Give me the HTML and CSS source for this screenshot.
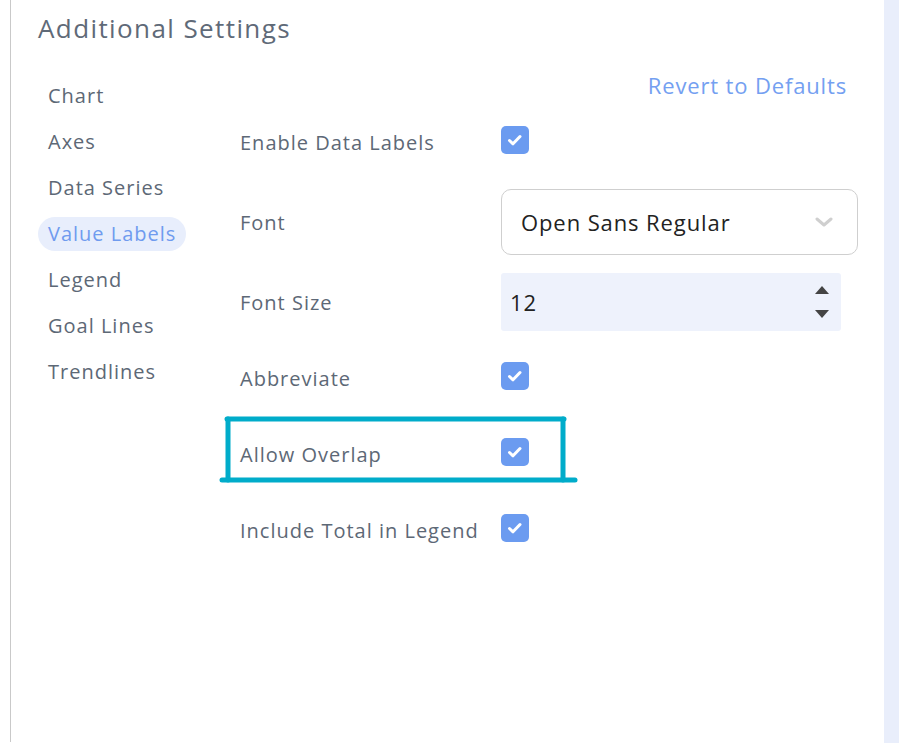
FILE: index.html
```html
<!DOCTYPE html>
<html lang="en">
<head>
<meta charset="utf-8">
<title>Additional Settings</title>
<link rel="stylesheet" href="styles.css">
</head>
<body>
<div class="page">
  <div class="panel">
    <h1 class="title">Additional Settings</h1>
    <div class="body">
      <nav class="nav">
        <div class="nav-item">Chart</div>
        <div class="nav-item">Axes</div>
        <div class="nav-item">Data Series</div>
        <div class="nav-item active">Value Labels</div>
        <div class="nav-item">Legend</div>
        <div class="nav-item">Goal Lines</div>
        <div class="nav-item">Trendlines</div>
      </nav>
      <div class="content">
        <div class="revert-row"><a class="revert">Revert to Defaults</a></div>
        <div class="form">
          <div class="row">
            <div class="label">Enable Data Labels</div>
            <div class="control"><span class="checkbox"><svg viewBox="0 0 28 28" width="28" height="28"><path d="M8.5 14.5 L12 17.8 L19 10.5" fill="none" stroke="#fff" stroke-width="3" stroke-linecap="round" stroke-linejoin="round"/></svg></span></div>
          </div>
          <div class="row">
            <div class="label">Font</div>
            <div class="control">
              <div class="select">
                <span class="select-text">Open Sans Regular</span>
                <svg class="chevron" viewBox="0 0 18 10" width="18" height="10"><polyline points="2,2 9,8 16,2" fill="none" stroke="#cfcfcf" stroke-width="3" stroke-linecap="round" stroke-linejoin="round"/></svg>
              </div>
            </div>
          </div>
          <div class="row">
            <div class="label">Font Size</div>
            <div class="control">
              <div class="number">
                <span class="number-text">12</span>
                <svg class="spinner" viewBox="0 0 16 36" width="16" height="36"><polygon points="1,10 8,2 15,10" fill="#444"/><polygon points="1,26 15,26 8,34" fill="#444"/></svg>
              </div>
            </div>
          </div>
          <div class="row">
            <div class="label">Abbreviate</div>
            <div class="control"><span class="checkbox"><svg viewBox="0 0 28 28" width="28" height="28"><path d="M8.5 14.5 L12 17.8 L19 10.5" fill="none" stroke="#fff" stroke-width="3" stroke-linecap="round" stroke-linejoin="round"/></svg></span></div>
          </div>
          <div class="row">
            <div class="label">Allow Overlap</div>
            <div class="control"><span class="checkbox"><svg viewBox="0 0 28 28" width="28" height="28"><path d="M8.5 14.5 L12 17.8 L19 10.5" fill="none" stroke="#fff" stroke-width="3" stroke-linecap="round" stroke-linejoin="round"/></svg></span></div>
          </div>
          <div class="row">
            <div class="label">Include Total in Legend</div>
            <div class="control"><span class="checkbox"><svg viewBox="0 0 28 28" width="28" height="28"><path d="M8.5 14.5 L12 17.8 L19 10.5" fill="none" stroke="#fff" stroke-width="3" stroke-linecap="round" stroke-linejoin="round"/></svg></span></div>
          </div>
        </div>
      </div>
    </div>
  </div>
  <div class="strip"></div>
  <svg class="annotation" width="900" height="743" viewBox="0 0 900 743">
    <g stroke="#00acca" stroke-width="5" stroke-linecap="round" fill="none">
      <line x1="227" y1="419" x2="564" y2="419"/>
      <line x1="228" y1="419" x2="228" y2="480"/>
      <line x1="563" y1="419" x2="563" y2="480"/>
      <line x1="222" y1="480" x2="575" y2="480"/>
    </g>
  </svg>
</div>
</body>
</html>
```

FILE: styles.css
```css
html, body {
  margin: 0;
  padding: 0;
  background: #ffffff;
}

body {
  font-family: "Open Sans", "Noto Sans", sans-serif;
  color: #5d6876;
}

.page {
  position: relative;
  display: flex;
  width: 900px;
  height: 743px;
  overflow: hidden;
}

.panel {
  margin-left: 10px;
  border-left: 1px solid #c9c9c9;
  width: 874px;
  height: 742px;
  padding-left: 27px;
  box-sizing: border-box;
}

.strip {
  width: 15px;
  height: 743px;
  background: #e9eefb;
}

.title {
  margin: 0;
  padding-top: 10px;
  font-size: 26px;
  font-weight: 400;
  line-height: 36px;
  letter-spacing: 1.4px;
  color: #5f6a78;
}

.body {
  display: flex;
  margin-top: 24px;
}

.nav {
  width: 202px;
  padding-top: 9px;
  display: flex;
  flex-direction: column;
  align-items: flex-start;
  gap: 12px;
}

.nav-item {
  font-size: 20px;
  line-height: 34px;
  height: 34px;
  padding: 0 10px;
  border-radius: 17px;
  letter-spacing: 1px;
  color: #5d6876;
}

.nav-item.active {
  background: #e8eefc;
  color: #6f9bef;
}

.content {
  width: 618px;
}

.revert-row {
  display: flex;
  justify-content: flex-end;
  padding-right: 11px;
  margin-bottom: 13px;
}

.revert {
  font-size: 22px;
  line-height: 30px;
  letter-spacing: 0.85px;
  color: #74a0f1;
}

.form {
  display: flex;
  flex-direction: column;
  gap: 18px;
}

.row {
  display: flex;
  align-items: center;
  min-height: 58px;
}

.label {
  width: 261px;
  font-size: 20px;
  line-height: 28px;
  padding-top: 2px;
  letter-spacing: 1px;
  color: #5d6876;
}

.control {
  display: flex;
  align-items: center;
}

.checkbox {
  display: block;
  width: 28px;
  height: 28px;
  border-radius: 5px;
  background: #6b9bf0;
  margin-top: -4px;
}

.checkbox svg {
  display: block;
}

.select {
  width: 357px;
  height: 66px;
  box-sizing: border-box;
  border: 1px solid #cfcfcf;
  border-radius: 10px;
  display: flex;
  align-items: center;
  justify-content: space-between;
  padding: 0 24px 0 19px;
}

.select-text {
  font-size: 22px;
  letter-spacing: 0.9px;
  color: #222;
}

.chevron {
  display: block;
}

.number {
  width: 340px;
  height: 58px;
  box-sizing: border-box;
  background: #eef2fc;
  border-radius: 3px;
  display: flex;
  align-items: center;
  justify-content: space-between;
  padding: 0 11px 0 9px;
}

.number-text {
  font-size: 22px;
  letter-spacing: 0.9px;
  color: #222;
}

.spinner {
  display: block;
}

.annotation {
  position: absolute;
  left: 0;
  top: 0;
  pointer-events: none;
}
```
